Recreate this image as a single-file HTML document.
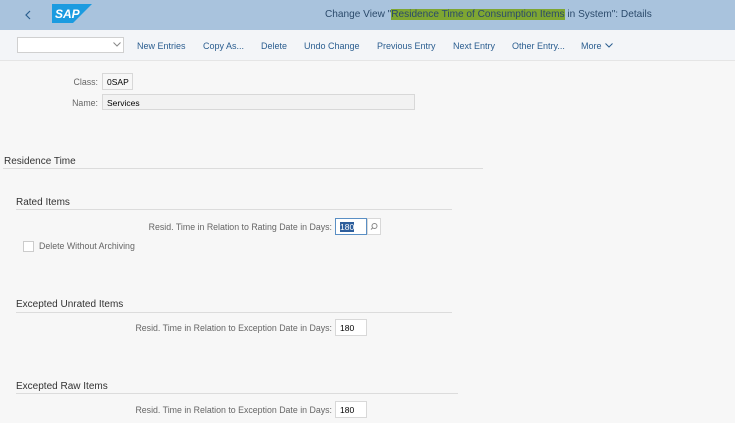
<!DOCTYPE html><html><head><style>
body{margin:0;width:735px;height:423px;overflow:hidden;background:#f7f7f7;font-family:"Liberation Sans",Arial,sans-serif;color:#333;position:relative}
.a{position:absolute;white-space:nowrap}
#hd{left:0;top:0;width:735px;height:30px;background:#a9c3dd}
#tb{left:0;top:30px;width:735px;height:30px;background:#f3f5f8;border-bottom:1px solid #e5e5e5}
.t{font-size:9px;color:#2a5d8f;top:41px}
.l{font-size:8.8px;color:#666;text-align:right}
.in{background:#fff;border:1px solid #d8d8d8;font-size:8.5px;color:#000;box-sizing:border-box;padding:3px 0 0 4px}
.h{font-size:10px;color:#333}
.ln{height:1px;background:#dcdcdc}
</style></head><body>
<div class="a" id="hd"></div>
<svg class="a" style="left:24px;top:10px" width="8" height="10"><path d="M6 1 L2 5 L6 9" stroke="#2b5f8f" stroke-width="1.2" fill="none"/></svg>
<svg class="a" style="left:52px;top:4px" width="40" height="19"><polygon points="0,0 40,0 21,19 0,19" fill="#1a9be0"/><text x="3" y="14" font-family="Liberation Sans" font-weight="bold" font-style="italic" font-size="12" fill="#fff">SAP</text></svg>
<div class="a" style="left:325px;top:9px;font-size:10.1px;color:#2b4a6b">Change View "<span style="background:#7ea632;color:#2b4a6b">Residence Time of Consumption Items</span> in System": Details</div>
<div class="a" id="tb"></div>
<div class="a" style="left:17px;top:37px;width:107px;height:16px;background:#fff;border:1px solid #d0d0d0;box-sizing:border-box"></div>
<svg class="a" style="left:113px;top:42px" width="8" height="5"><path d="M0.5 0.5 L4 4 L7.5 0.5" stroke="#888" fill="none"/></svg>
<div class="a t" style="left:137px">New Entries</div>
<div class="a t" style="left:203px">Copy As...</div>
<div class="a t" style="left:261px">Delete</div>
<div class="a t" style="left:304px">Undo Change</div>
<div class="a t" style="left:377px">Previous Entry</div>
<div class="a t" style="left:453px">Next Entry</div>
<div class="a t" style="left:512px">Other Entry...</div>
<div class="a t" style="left:581px">More</div>
<svg class="a" style="left:605px;top:43px" width="8" height="5"><path d="M0.5 0.5 L4 4 L7.5 0.5" stroke="#2a5d8f" fill="none"/></svg>
<div class="a l" style="left:40px;width:58px;top:77px">Class:</div>
<div class="a in" style="left:102px;top:73px;width:31px;height:17px;background:#f7f7f7">0SAP</div>
<div class="a l" style="left:40px;width:58px;top:98px">Name:</div>
<div class="a in" style="left:102px;top:94px;width:313px;height:16px;background:#f2f2f2">Services</div>
<div class="a h" style="left:4px;top:156px">Residence Time</div>
<div class="a ln" style="left:3px;top:168px;width:480px"></div>
<div class="a h" style="left:16px;top:197px">Rated Items</div>
<div class="a ln" style="left:16px;top:209px;width:436px"></div>
<div class="a l" style="left:90px;width:242px;top:222px">Resid. Time in Relation to Rating Date in Days:</div>
<div class="a in" style="left:335px;top:218px;width:32px;height:17px;border-color:#5a8fc4"><span style="background:#2d5e9c;color:#fff">180</span></div>
<div class="a in" style="left:367px;top:218px;width:14px;height:17px;padding:0"><svg width="12" height="15"><circle cx="6.5" cy="7" r="2.5" stroke="#888" fill="none"/><path d="M5 8.5 L3 10.5" stroke="#888"/></svg></div>
<div class="a" style="left:23px;top:241px;width:9px;height:9px;border:1px solid #ccc;background:#fff"></div>
<div class="a l" style="left:39px;top:241px;text-align:left">Delete Without Archiving</div>
<div class="a h" style="left:16px;top:299px">Excepted Unrated Items</div>
<div class="a ln" style="left:16px;top:312px;width:436px"></div>
<div class="a l" style="left:90px;width:242px;top:323px">Resid. Time in Relation to Exception Date in Days:</div>
<div class="a in" style="left:335px;top:319px;width:32px;height:17px">180</div>
<div class="a h" style="left:16px;top:381px">Excepted Raw Items</div>
<div class="a ln" style="left:16px;top:393px;width:442px"></div>
<div class="a l" style="left:90px;width:242px;top:405px">Resid. Time in Relation to Exception Date in Days:</div>
<div class="a in" style="left:335px;top:401px;width:32px;height:17px">180</div>
</body></html>
